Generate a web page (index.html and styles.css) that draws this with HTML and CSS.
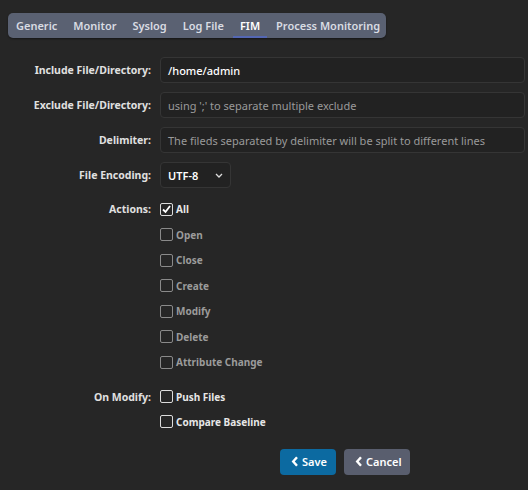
FILE: index.html
```html
<!DOCTYPE html>
<html>
<head>
<meta charset="utf-8">
<link rel="stylesheet" href="styles.css">
</head>
<body>
<div class="page">
  <nav class="tabs">
    <span class="tab">Generic</span>
    <span class="tab">Monitor</span>
    <span class="tab">Syslog</span>
    <span class="tab">Log File</span>
    <span class="tab active">FIM</span>
    <span class="tab">Process Monitoring</span>
  </nav>
  <form class="form">
    <label class="lbl">Include File/Directory:</label>
    <div class="ctl"><div class="input">/home/admin</div></div>

    <label class="lbl">Exclude File/Directory:</label>
    <div class="ctl"><div class="input ph">using ';' to separate multiple exclude</div></div>

    <label class="lbl">Delimiter:</label>
    <div class="ctl"><div class="input ph">The fileds separated by delimiter will be split to different lines</div></div>

    <label class="lbl">File Encoding:</label>
    <div class="ctl"><div class="select"><span>UTF-8</span><svg class="chev" width="8" height="5" viewBox="0 0 8 5"><path d="M1 1l3 3 3-3" fill="none" stroke="#ddd" stroke-width="1.3"/></svg></div></div>

    <label class="lbl lbl-cb">Actions:</label>
    <div class="ctl checks">
      <div class="cb on"><span class="box checked"><svg width="11" height="11" viewBox="0 0 11 11"><path d="M2 5.5l2.5 2.5 4.5-6" fill="none" stroke="#fff" stroke-width="1.8"/></svg></span>All</div>
      <div class="cb off"><span class="box"></span>Open</div>
      <div class="cb off"><span class="box"></span>Close</div>
      <div class="cb off"><span class="box"></span>Create</div>
      <div class="cb off"><span class="box"></span>Modify</div>
      <div class="cb off"><span class="box"></span>Delete</div>
      <div class="cb off"><span class="box"></span>Attribute Change</div>
    </div>

    <label class="lbl lbl-cb">On Modify:</label>
    <div class="ctl checks short">
      <div class="cb on"><span class="box"></span>Push Files</div>
      <div class="cb on"><span class="box"></span>Compare Baseline</div>
    </div>

    <div class="ctl buttons">
      <button type="button" class="btn save"><svg class="chevl" width="8" height="11" viewBox="0 0 8 11"><path d="M6 1.2L2.2 5.5 6 9.8" fill="none" stroke="#fff" stroke-width="2.4"/></svg>Save</button>
      <button type="button" class="btn cancel"><svg class="chevl" width="8" height="11" viewBox="0 0 8 11"><path d="M6 1.2L2.2 5.5 6 9.8" fill="none" stroke="#fff" stroke-width="2.4"/></svg>Cancel</button>
    </div>
  </form>
</div>
</body>
</html>
```
FILE: styles.css
```css
html, body {
  margin: 0;
  padding: 0;
  background: #262626;
}
body {
  font-family: "Noto Sans", "Open Sans", sans-serif;
  color: #e2e2e2;
  font-size: 11px;
}
.page {
  padding: 13px 3px 0 8px;
}
.tabs {
  display: inline-flex;
  background: #5a6172;
  border-radius: 5px;
  height: 25px;
  padding: 0 6px 0 8px;
  align-items: stretch;
  box-shadow: 0 1px 2px rgba(0,0,0,0.4);
}
.tab {
  display: flex;
  align-items: center;
  padding: 0 8px;
  font-size: 11px;
  font-weight: 600;
  color: #d9dce3;
  position: relative;
}
.tab:first-child { padding-left: 0; }
.tab:last-child { padding-right: 0; }
.tab.active {
  color: #ffffff;
}
.tab.active::after {
  content: "";
  position: absolute;
  left: 1px;
  right: 1px;
  bottom: 0;
  height: 2px;
  background: #5467b3;
}
.form {
  display: grid;
  grid-template-columns: 143px 1fr;
  column-gap: 9px;
  row-gap: 9px;
  margin-top: 19px;
}
.lbl {
  text-align: right;
  font-weight: 700;
  color: #e0e0e0;
  font-size: 10.5px;
  line-height: 26px;
}
.lbl-cb {
  line-height: 24px;
}
.input {
  height: 26px;
  box-sizing: border-box;
  border: 1px solid #353535;
  border-radius: 4px;
  background: #222222;
  padding: 0 7px;
  display: flex;
  align-items: center;
  font-size: 11px;
  font-weight: 500;
  color: #ffffff;
  white-space: nowrap;
  overflow: hidden;
}
.input.ph {
  color: #9a9a9a;
  font-weight: 400;
}
.select {
  width: 71px;
  height: 26px;
  box-sizing: border-box;
  border: 1px solid #353535;
  border-radius: 4px;
  background: #222222;
  padding: 0 7px;
  display: flex;
  align-items: center;
  justify-content: space-between;
  font-size: 11px;
  font-weight: 600;
  color: #ffffff;
}
.checks {
  display: flex;
  flex-direction: column;
}
.cb {
  height: 25.5px;
  display: flex;
  align-items: center;
  gap: 3px;
  font-weight: 700;
  font-size: 10px;
  padding-bottom: 1px;
  box-sizing: border-box;
}
.short .cb { height: 25px; }
.cb.on { color: #e6e6e6; }
.cb.off { color: #9b9b9b; }
.box {
  width: 13px;
  height: 13px;
  box-sizing: border-box;
  border: 1.5px solid #8a8a8a;
  border-radius: 2px;
  display: flex;
  align-items: center;
  justify-content: center;
}
.cb.on .box { border-color: #dcdcdc; }
.buttons {
  grid-column: 2;
  display: flex;
  gap: 8px;
  padding-left: 120px;
  margin-top: 5px;
}
.btn {
  height: 26px;
  border: none;
  border-radius: 4px;
  color: #fff;
  font-family: inherit;
  font-weight: 600;
  font-size: 11px;
  display: flex;
  align-items: center;
  gap: 3px;
  padding: 0 10px 0 11px;
}
.chevl { flex: none; }
.save { background: #0c6aa1; width: 56px; }
.cancel { background: #595e6e; width: 66px; }
```
